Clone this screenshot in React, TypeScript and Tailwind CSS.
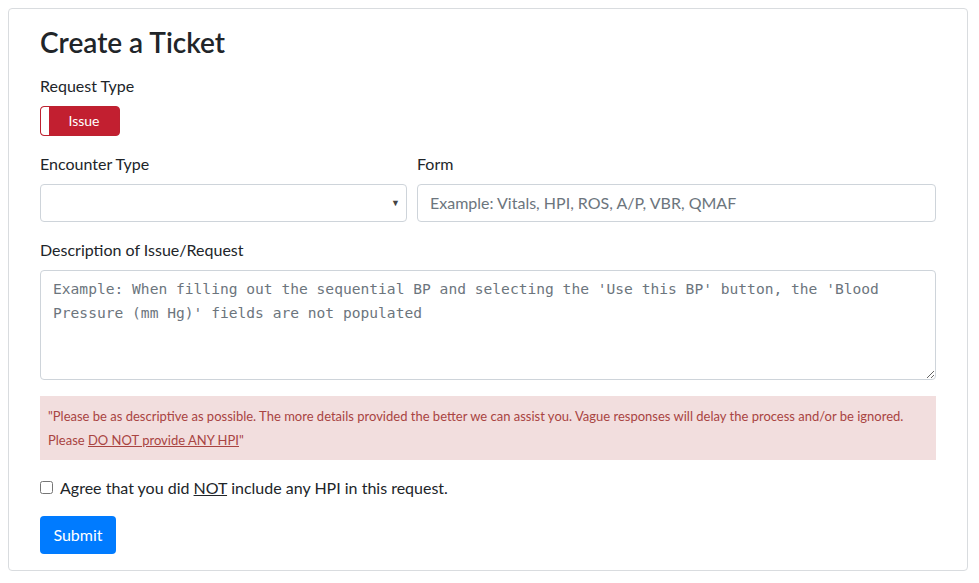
import React from "react";

const sans = "font-['Segoe_UI','Lato','Noto_Sans',sans-serif]";

function Label({ children }: { children: React.ReactNode }) {
  return <label className="mb-2 block text-[16px] leading-6 text-[#212529]">{children}</label>;
}

export default function App() {
  return (
    <div className={`${sans} min-h-[583px] bg-white p-2`}>
      <div className="w-[960px] rounded-[4px] border border-[#d9dcdf] bg-white pl-[31px] pr-[31px] pt-[17px] pb-[16px]">
        <h3 className="mb-[14px] text-[28px] font-semibold leading-[33.6px] text-[#212529]">Create a Ticket</h3>

        <div className="mb-4">
          <Label>Request Type</Label>
          <div className="flex h-[30px] w-[80px] overflow-hidden rounded-[4px] border border-[#bd2130] bg-[#c21f30]">
            <span className="h-full w-[8px] rounded-l-[3px] bg-white" />
            <span className="flex flex-1 items-center justify-center text-[14px] text-white">Issue</span>
          </div>
        </div>

        <div className="mb-4 flex gap-[10px]">
          <div className="w-[367px]">
            <Label>Encounter Type</Label>
            <div className="relative h-[38px] rounded-[4px] border border-[#ced4da] bg-white">
              <span className="absolute right-[6px] top-[10px] text-[9px] leading-4 text-[#444]">▼</span>
            </div>
          </div>
          <div className="flex-1">
            <Label>Form</Label>
            <input
              className="h-[38px] w-full rounded-[4px] border border-[#ced4da] px-3 text-[16px] text-[#495057] outline-none placeholder:text-[#6c757d]"
              placeholder="Example: Vitals, HPI, ROS, A/P, VBR, QMAF"
            />
          </div>
        </div>

        <div className="mb-4">
          <Label>Description of Issue/Request</Label>
          <textarea
            className="block h-[110px] w-full rounded-[4px] border border-[#ced4da] px-3 py-[6px] font-['DejaVu_Sans_Mono',monospace] text-[14.6px] leading-6 text-[#495057] outline-none placeholder:text-[#6c757d]"
            placeholder="Example: When filling out the sequential BP and selecting the 'Use this BP' button, the 'Blood Pressure (mm Hg)' fields are not populated"
          />
        </div>

        <div className="mb-4 bg-[#f2dede] px-2 py-2 text-[13px] leading-6 text-[#a94442]">
          "Please be as descriptive as possible. The more details provided the better we can assist you. Vague responses will delay the process and/or be ignored.
          <br />
          Please <u>DO NOT provide ANY HPI</u>"
        </div>

        <div className="mb-4 flex h-6 items-center">
          <input type="checkbox" className="m-0 h-[13px] w-[13px]" />
          <span className="ml-[7px] text-[16px] leading-6 text-[#212529]">
            Agree that you did <u>NOT</u> include any HPI in this request.
          </span>
        </div>

        <button className="h-[38px] w-[76px] rounded-[4px] bg-[#007bff] text-[16px] text-white">Submit</button>
      </div>
    </div>
  );
}
